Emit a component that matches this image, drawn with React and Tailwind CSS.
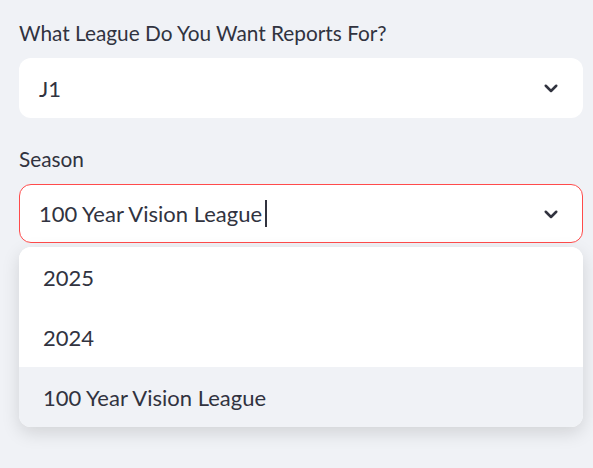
function Chevron() {
    return (
        <svg width="18" height="18" viewBox="0 0 24 24" fill="none" stroke="#31333f" strokeWidth="3.4" strokeLinecap="round" strokeLinejoin="round">
            <path d="M5 9l7 7 7-7" />
        </svg>
    );
}

export default function App() {
    const options = ['2025', '2024', '100 Year Vision League'];
    const active = 2;

    return (
        <div className="w-[593px] h-[468px] bg-[#f0f2f6] overflow-hidden font-['Lato',sans-serif] text-[#31333f]">
            <div className="px-[19px] pt-[19px] pr-[10px]">
                <div className="text-[20.8px] leading-[28px] mb-[11px]">What League Do You Want Reports For?</div>
                <div className="h-[60px] bg-white rounded-[12px] flex items-center justify-between pl-[20px] pr-[23px]">
                    <span className="text-[22px]">J1</span>
                    <Chevron />
                </div>

                <div className="text-[20.8px] leading-[28px] mt-[27px] mb-[11px]">Season</div>
                <div className="relative">
                    <div className="h-[59px] bg-white rounded-[12px] border border-[#ff4b4b] flex items-center justify-between pl-[19px] pr-[22px]">
                        <span className="text-[22px] flex items-center">
                            100 Year Vision League
                            <span className="inline-block w-[2px] h-[27px] bg-[#31333f] ml-[3px]" />
                        </span>
                        <Chevron />
                    </div>
                    <div className="absolute left-0 right-0 top-[63px] bg-white rounded-[12px] overflow-hidden shadow-[0_6px_18px_rgba(0,0,0,0.13)]">
                        {options.map((o, i) => (
                            <div
                                key={o}
                                className={`h-[60px] flex items-center pl-[24px] text-[22px] ${i === active ? 'bg-[#f0f2f6]' : 'bg-white'}`}
                            >
                                {o}
                            </div>
                        ))}
                    </div>
                </div>
            </div>
        </div>
    );
}
